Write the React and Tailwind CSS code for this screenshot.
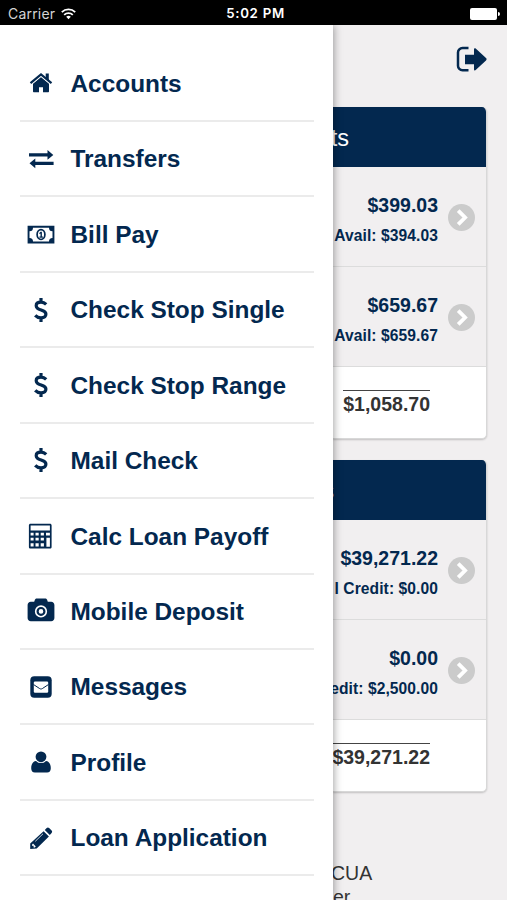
import React from "react";

function Icon({ name }) {
  const p = { width: 28, height: 28, viewBox: "0 0 28 28", fill: "currentColor", className: "shrink-0" };
  switch (name) {
    case "home":
      return (
        <svg {...p}>
          <path d="M14 7 6 13.700v7.600c0 .6.400 1 1 1h5v-5h4v5h5c.6 0 1-.4 1-1v-7.600z" />
          <path d="M3.500 13.200 14 4.500l10.500 8.700" fill="none" stroke="#fff" strokeWidth="3.600" />
          <path d="M3.500 13.100 14 4.400l10.500 8.700" fill="none" stroke="currentColor" strokeWidth="2.200" />
          <path d="M18.700 3.600h3.100v7.200l-3.100-2.600z" />
        </svg>
      );
    case "transfer":
      return (
        <svg {...p}>
          <path d="M2 7.300h18.500V4L26.300 8.900l-5.800 4.900v-3.300H2z" />
          <path d="M26.600 15.700H8.300v-3.300L2.500 17.300l5.800 4.900v-3.300h18.300z" />
        </svg>
      );
    case "bill":
      return (
        <svg {...p}>
          <path fillRule="evenodd" d="M.6 4.700h26.800v17.800H.6zM6 6.700A3.600 3.600 0 0 1 2.500 10.300v6.600A3.600 3.600 0 0 1 6 20.500h16a3.600 3.600 0 0 1 3.500-3.600v-6.600A3.600 3.600 0 0 1 22 6.700z" />
          <ellipse cx="14" cy="13.600" rx="3.900" ry="4.900" fill="none" stroke="currentColor" strokeWidth="1.700" />
          <path d="M12.100 12.300 13.500 10.700h1.400v4.900h1v1.200h-3.500v-1.200h1.100v-3.200l-.7.600z" />
        </svg>
      );
    case "dollar":
      return (
        <svg {...p} fill="none" stroke="currentColor" strokeWidth="3.200">
          <path d="M19.200 7.400C17.700 5.900 16 5.200 14 5.200c-2.900 0-4.800 1.400-4.800 3.500 0 5.300 9.700 3.300 9.700 8.300 0 2.300-1.900 3.800-4.900 3.800-2.400 0-4.300-.9-5.800-2.500M14 1v4.200M14 20.800v4.300" />
        </svg>
      );
    case "calc":
      return (
        <svg {...p}>
          <path fillRule="evenodd" d="M3 1.500h19.500c.9 0 1.600.7 1.600 1.600v21.700c0 .9-.7 1.600-1.600 1.600H3c-.9 0-1.600-.7-1.600-1.600V3.100c0-.9.7-1.600 1.600-1.600zM3.100 3.300v5h19.300v-5zM3.100 10.500v2.800h3v-2.800zM8 10.500v2.800h3.200v-2.800zM13.200 10.500v2.800h3.200v-2.800zM18.500 10.500v2.800h3.900v-2.800zM3.100 15.600v2.800h3v-2.800zM8 15.600v2.800h3.200v-2.800zM13.200 15.600v2.800h3.200v-2.800zM18.900 15.600v9h3.500v-9zM3.100 21v3.400h3v-3.400zM8 21v3.400h3.200v-3.400zM13.200 21v3.400h3.200v-3.400z" transform="translate(.5 -.8)" />
        </svg>
      );
    case "camera":
      return (
        <svg {...p}>
          <path fillRule="evenodd" d="M9.800.4h8.400c.8 0 1.500.5 1.800 1.200l.8 2.200h3.400c1.800 0 3.200 1.400 3.200 3.200v13c0 1.800-1.400 3.200-3.200 3.200H3.800C2 23.200.6 21.800.6 20V7c0-1.800 1.400-3.200 3.200-3.200h3.400L8 1.600C8.300.9 9 .4 9.800.4zM14 7.300a6.100 6.100 0 1 0 0 12.200 6.100 6.100 0 0 0 0-12.200z" />
          <circle cx="14" cy="13.400" r="3.400" fill="none" stroke="currentColor" strokeWidth="2.200" />
        </svg>
      );
    case "mail":
      return (
        <svg {...p}>
          <rect x="3.300" y="2.300" width="21.400" height="21.400" rx="4" />
          <rect x="6.800" y="7.500" width="14.400" height="11.200" rx="1.200" fill="#fff" />
          <path d="m6.500 10.500 6.200 4.100c.8.500 1.800.5 2.600 0l6.200-4.100" fill="none" stroke="currentColor" strokeWidth="1" />
        </svg>
      );
    case "user":
      return (
        <svg {...p}>
          <circle cx="14" cy="7.800" r="5.400" />
          <path d="M9 11.900c-3.400.5-4.800 3.700-4.800 7.300 0 2.700 1.400 4.300 3.700 4.300h12.200c2.300 0 3.700-1.600 3.700-4.300 0-3.600-1.400-6.800-4.800-7.300a6.800 6.800 0 0 1-10 0z" />
        </svg>
      );
    default:
      return (
        <svg {...p}>
          <path fillRule="evenodd" d="m16.600 6.200 5.300 5.300L9.700 23.400 3.200 24v-5.600zM6 18.600 5 19.700v1.100h1.600v1.600h1.100l1.100-1z" />
          <path d="m17.800 5 1.900-1.900c.7-.7 1.700-.7 2.400 0l2.500 2.500c.7.700.7 1.700 0 2.400l-1.800 1.900z" />
          <path d="m8.300 16.300 7.700-7.500" stroke="#fff" strokeWidth=".8" />
        </svg>
      );
  }
}

const menu = [
  ["home", "Accounts"],
  ["transfer", "Transfers"],
  ["bill", "Bill Pay"],
  ["dollar", "Check Stop Single"],
  ["dollar", "Check Stop Range"],
  ["dollar", "Mail Check"],
  ["calc", "Calc Loan Payoff"],
  ["camera", "Mobile Deposit"],
  ["mail", "Messages"],
  ["user", "Profile"],
  ["pencil", "Loan Application"],
];

function StatusBar() {
  return (
    <header className="grid h-[25px] shrink-0 grid-cols-3 items-center bg-black pt-[2px] font-[Inter,sans-serif] text-[13.3px] leading-none text-white">
      <div className="flex items-center gap-[6px] pl-2 text-[14px] tracking-[0.2px] text-[#d4d4d4]">
        Carrier
        <svg width="15" height="12" viewBox="0 0 15 12" fill="none" stroke="#fff" strokeWidth="1.800">
          <path d="M.8 4.100a9.600 9.600 0 0 1 13.400 0M3.200 6.800a6.200 6.200 0 0 1 8.600 0" />
          <path d="M5.200 8.800a3.300 3.300 0 0 1 4.600 0L7.500 11.200z" fill="#fff" stroke="none" />
        </svg>
      </div>
      <div className="pl-[4px] text-center font-semibold tracking-[0.7px] whitespace-nowrap">5:02 PM</div>
      <div className="flex items-center justify-end gap-[1px] pr-[7px]">
        <span className="h-[12px] w-[27px] rounded-[2px] bg-white" />
        <span className="h-[4px] w-[2px] rounded-r-full bg-white" />
      </div>
    </header>
  );
}

function Balance({ amount, detail }) {
  return (
    <div className="flex h-[99.800px] items-center justify-end gap-[10px] border-b border-[#dcdcdc] bg-[#f1eff0] pt-[2px] pr-[11px]">
      <div className="flex flex-col items-end gap-[7px] pt-[6px] font-bold whitespace-nowrap text-[#03284f]">
        <div className="text-[19.500px] leading-[24px]">{amount}</div>
        <div className="text-[15.600px] leading-[24px] tracking-[0.080px]">{detail}</div>
      </div>
      <svg className="shrink-0" width="27" height="27" viewBox="0 0 27 27">
        <circle cx="13.500" cy="13.500" r="13.500" fill="#cbcbcb" />
        <path d="m10.200 6.600 6.900 6.900-6.900 6.900" fill="none" stroke="#fff" strokeWidth="3.800" />
      </svg>
    </div>
  );
}

function Card({ title, rows, total }) {
  return (
    <section className="flex h-[331.500px] flex-col overflow-hidden rounded-r-[5px] border-r border-b border-[#d8d8d8] bg-white shadow-[0_1px_2px_rgba(0,0,0,0.2)]">
      <div className="flex h-[60px] shrink-0 items-center justify-end bg-[#03284f] pt-[3px] text-[23.500px] text-white">
        {title}
      </div>
      {rows.map(([amount, detail]) => (
        <Balance key={amount} amount={amount} detail={detail} />
      ))}
      <div className="flex justify-end pt-[23px] pr-[56px]">
        <div className="border-t border-[#444] text-[19.500px] leading-[26px] font-bold text-[#333]">{total}</div>
      </div>
    </section>
  );
}

export default function App() {
  return (
    <div className="flex h-[900px] w-[507px] flex-col overflow-hidden bg-[#f1eff0] font-['Liberation_Sans',Arial,sans-serif]">
      <StatusBar />
      <div className="flex min-h-0 flex-1">
        <nav className="z-10 w-[333px] shrink-0 bg-white pt-[21.500px] pr-[19px] pl-5 shadow-[1px_0_8px_rgba(0,0,0,0.36)] [clip-path:inset(0_-20px_0_0)]">
          {menu.map(([icon, label]) => (
            <div key={label} className="flex h-[75.450px] items-center gap-4 border-b-2 border-[#ebebeb] pt-[2px] pl-[7px] text-[24.400px] font-bold whitespace-nowrap text-[#03284f]">
              <Icon name={icon} />
              <span className="-ml-[0.500px]">{label}</span>
            </div>
          ))}
        </nav>
        <main className="flex min-w-0 flex-1 flex-col overflow-hidden pr-5">
          <div className="flex h-[82px] shrink-0 items-start justify-end pt-[21px]">
            <svg width="31" height="27" viewBox="0 0 31 27" className="text-[#03284f]">
              <path d="M12.500 2H6.500A4.500 4.500 0 0 0 2 6.500v13.300a4.500 4.500 0 0 0 4.500 4.500H12.500" fill="none" stroke="currentColor" strokeWidth="2.500" />
              <path d="M9 8.800h9V3.500c0-1.200.9-1.600 1.700-.9L30 12.100c.8.800.8 1.500 0 2.300l-10.300 9.700c-.8.700-1.700.3-1.700-.9V18.200H9z" fill="currentColor" />
            </svg>
          </div>
          <div className="flex flex-col gap-[21.500px]">
            <Card
              title={<span className="pr-[137px]">ts</span>}
              rows={[["$399.03", "Avail: $394.03"], ["$659.67", "Avail: $659.67"]]}
              total="$1,058.70"
            />
            <Card
              title={<span className="pr-[152px]">s</span>}
              rows={[["$39,271.22", "l Credit: $0.00"], ["$0.00", "edit: $2,500.00"]]}
              total="$39,271.22"
            />
          </div>
          <div className="flex w-[39px] flex-col pt-[69px] text-[19.500px] leading-[24px] text-[#333]">
            <div className="-ml-[2px]">CUA</div>
            <div>er</div>
          </div>
        </main>
      </div>
    </div>
  );
}
